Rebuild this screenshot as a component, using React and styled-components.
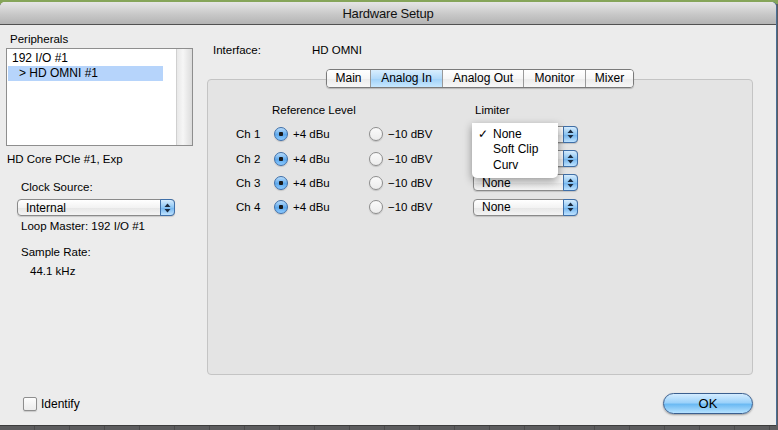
import React from 'react';
import styled, { createGlobalStyle } from 'styled-components';

const GlobalStyle = createGlobalStyle`
  html, body {
    margin: 0;
    padding: 0;
    background: #5a5a5c;
  }
  * {
    box-sizing: border-box;
  }
`;

const Desktop = styled.div`
  width: 778px;
  height: 430px;
  overflow: hidden;
  padding-top: 2px;
  background:
    linear-gradient(#86a55a, #86a55a) top / 100% 4px no-repeat,
    repeating-linear-gradient(90deg, #5c5c5e 0 34px, #4a4a4c 34px 35px);
  font-family: "Liberation Sans", Arial, sans-serif;
  font-size: 11.5px;
  color: #000;
`;

const Window = styled.div`
  width: 776px;
  height: 423px;
  display: flex;
  flex-direction: column;
  background: #ececec;
  border-radius: 5px 5px 0 0;
  box-shadow: 1px 0 0 #4a6e96, 0 1px 0 #3c3c3c;
  overflow: hidden;
`;

const TitleBar = styled.div`
  height: 23px;
  flex: none;
  display: flex;
  align-items: center;
  justify-content: center;
  background: linear-gradient(#e6e6e6, #c6c6c6 60%, #b4b4b4);
  border-bottom: 1px solid #515151;
  font-size: 13px;
  color: #111;
  letter-spacing: -0.2px;
`;

const Body = styled.div`
  flex: 1;
  display: flex;
  flex-direction: column;
`;

const Content = styled.div`
  display: flex;
  flex: 1;
`;

const Sidebar = styled.div`
  width: 207px;
  flex: none;
  display: flex;
  flex-direction: column;
  padding: 7px 0 0 6px;
`;

const Label = styled.div`
  line-height: 14px;
  margin-left: ${(p) => p.indent || 0}px;
  margin-top: ${(p) => p.top || 0}px;
`;

const ListBox = styled.div`
  width: 187px;
  height: 98px;
  margin-top: 2px;
  background: #fff;
  border: 1px solid #8e8e8e;
  display: flex;
`;

const ListItems = styled.div`
  flex: 1;
  padding: 2px 1px;
  font-size: 12px;
`;

const ListItem = styled.div`
  height: 15px;
  line-height: 15px;
  padding-left: ${(p) => (p.child ? 11 : 4)}px;
  width: 155px;
  background: ${(p) => (p.selected ? '#b6d4fb' : 'transparent')};
`;

const ScrollTrack = styled.div`
  width: 16px;
  background: linear-gradient(90deg, #e8e8e8, #f6f6f6 40%, #dcdcdc);
  border-left: 1px solid #d0d0d0;
`;

const SelectWrap = styled.div`
  margin: 5px 0 0 11px;
`;

const Select = styled.div`
  position: relative;
  width: ${(p) => p.width}px;
  height: 17px;
  display: flex;
  align-items: center;
  border: 1px solid #8a8a8a;
  border-radius: 4px;
  background: linear-gradient(#ffffff, #f3f3f3 50%, #e6e6e6 51%, #f4f4f4);
  padding-left: 8px;
  font-size: 12px;
  box-shadow: 0 1px 1px rgba(0, 0, 0, 0.15);
`;

const Stepper = styled.div`
  position: absolute;
  right: -1px;
  top: -1px;
  bottom: -1px;
  width: 15px;
  border: 1px solid #3f6fa8;
  border-radius: 0 4px 4px 0;
  background: linear-gradient(#d6ecfd, #8cc6f4 50%, #6fb3ee 51%, #bfe3ff);
  display: flex;
  align-items: center;
  justify-content: center;
`;

const Arrows = () => (
  <svg width="7" height="10" viewBox="0 0 7 10">
    <path d="M3.5 0.5 L6.5 4 H0.5 Z" fill="#1b2b3f" />
    <path d="M3.5 9.5 L6.5 6 H0.5 Z" fill="#1b2b3f" />
  </svg>
);

const Main = styled.div`
  flex: 1;
  display: flex;
  flex-direction: column;
  padding: 18px 23px 0 0;
`;

const InfoRow = styled.div`
  display: flex;
  padding-left: 6px;
  line-height: 14px;
`;

const InfoKey = styled.div`
  width: 99px;
`;

const TabArea = styled.div`
  margin-top: 12px;
  display: flex;
  flex-direction: column;
`;

const Tabs = styled.div`
  display: flex;
  align-self: flex-start;
  margin-left: 119px;
  position: relative;
  z-index: 1;
  border: 1px solid #7a7a7a;
  border-radius: 4px;
  overflow: hidden;
  box-shadow: 0 1px 1px rgba(0, 0, 0, 0.2);
`;

const Tab = styled.div`
  height: 17px;
  line-height: 17px;
  width: ${(p) => p.w}px;
  text-align: center;
  font-size: 12px;
  border-left: ${(p) => (p.first ? 'none' : '1px solid #9a9a9a')};
  background: ${(p) =>
    p.active
      ? 'linear-gradient(#d9eefe, #b2dafa 50%, #9fd0f7 51%, #c7e8ff)'
      : 'linear-gradient(#ffffff, #f6f6f6 50%, #ebebeb 51%, #f7f7f7)'};
`;

const TabBox = styled.div`
  margin-top: -9px;
  height: 296px;
  border: 1px solid #c4c4c4;
  border-radius: 4px;
  background: #e4e4e4;
  padding: 23px 0 0 28px;
`;

const Grid = styled.div`
  display: grid;
  grid-template-columns: 38px 95px 104px 106px;
  grid-template-rows: 19px repeat(4, 24.4px);
  align-items: center;
`;

const Header = styled.div`
  grid-column: ${(p) => p.col};
  margin-left: ${(p) => p.shift || 0}px;
  align-self: start;
  line-height: 14px;
`;

const Option = styled.div`
  display: flex;
  align-items: center;
  gap: 5px;
`;

const Radio = styled.div`
  width: 14px;
  height: 14px;
  border-radius: 50%;
  border: 1px solid ${(p) => (p.checked ? '#3f6fa8' : '#8e8e8e')};
  background: ${(p) =>
    p.checked
      ? 'radial-gradient(circle at 50% 50%, #1a1a1a 0 2px, transparent 2.5px), linear-gradient(#b8dcfb, #5fa9ec 55%, #8ccaff)'
      : 'linear-gradient(#fafafa, #ececec)'};
  box-shadow: 0 1px 1px rgba(0, 0, 0, 0.15);
`;

const Cell = styled.div`
  position: relative;
`;

const Menu = styled.div`
  position: absolute;
  left: -1px;
  top: -3px;
  width: 86px;
  z-index: 2;
  padding: 4px 0 4px;
  background: #fff;
  border-radius: 0 0 5px 5px;
  box-shadow: 0 3px 8px rgba(0, 0, 0, 0.4);
  font-size: 12px;
`;

const MenuItem = styled.div`
  position: relative;
  height: 15.7px;
  line-height: 15.7px;
  padding-left: 21px;
`;

const Check = styled.span`
  position: absolute;
  left: 6px;
`;

const Footer = styled.div`
  height: 52px;
  display: flex;
  align-items: center;
  justify-content: space-between;
  padding: 5px 23px 0 23px;
`;

const CheckRow = styled.div`
  display: flex;
  align-items: center;
  gap: 4px;
  font-size: 12px;
`;

const CheckBox = styled.div`
  width: 14px;
  height: 14px;
  border: 1px solid #8e8e8e;
  border-radius: 2px;
  background: linear-gradient(#fdfdfd, #ececec);
  box-shadow: 0 1px 1px rgba(0, 0, 0, 0.15);
`;

const OkButton = styled.div`
  width: 90px;
  height: 21px;
  border: 1px solid #3a5f8f;
  border-radius: 11px;
  background: linear-gradient(#d4ecff, #9cd2fa 45%, #6cbaf3 55%, #b6e2ff);
  display: flex;
  align-items: center;
  justify-content: center;
  font-size: 13px;
  box-shadow: 0 1px 2px rgba(0, 0, 0, 0.35);
`;

const channels = ['Ch 1', 'Ch 2', 'Ch 3', 'Ch 4'];
const tabs = ['Main', 'Analog In', 'Analog Out', 'Monitor', 'Mixer'];
const tabWidths = [43, 72, 81, 62, 48];

export default function App() {
  return (
    <>
      <GlobalStyle />
      <Desktop>
        <Window>
          <TitleBar>Hardware Setup</TitleBar>
          <Body>
            <Content>
              <Sidebar>
                <Label indent={4}>Peripherals</Label>
                <ListBox>
                  <ListItems>
                    <ListItem>192 I/O #1</ListItem>
                    <ListItem child selected>&gt; HD OMNI #1</ListItem>
                  </ListItems>
                  <ScrollTrack />
                </ListBox>
                <Label indent={1} top={6}>HD Core PCIe #1, Exp</Label>
                <Label indent={15} top={14}>Clock Source:</Label>
                <SelectWrap>
                  <Select width={158}>
                    Internal
                    <Stepper><Arrows /></Stepper>
                  </Select>
                </SelectWrap>
                <Label indent={15} top={3}>Loop Master: 192 I/O #1</Label>
                <Label indent={15} top={12}>Sample Rate:</Label>
                <Label indent={24} top={5}>44.1 kHz</Label>
              </Sidebar>
              <Main>
                <InfoRow>
                  <InfoKey>Interface:</InfoKey>
                  <div>HD OMNI</div>
                </InfoRow>
                <TabArea>
                  <Tabs>
                    {tabs.map((t, i) => (
                      <Tab key={t} w={tabWidths[i]} first={i === 0} active={t === 'Analog In'}>
                        {t}
                      </Tab>
                    ))}
                  </Tabs>
                  <TabBox>
                    <Grid>
                      <Header col={2} shift={-2}>Reference Level</Header>
                      <Header col={4} shift={2}>Limiter</Header>
                      {channels.map((ch, i) => (
                        <React.Fragment key={ch}>
                          <div>{ch}</div>
                          <Option>
                            <Radio checked />
                            <span>+4 dBu</span>
                          </Option>
                          <Option>
                            <Radio />
                            <span>&minus;10 dBV</span>
                          </Option>
                          <Cell>
                            <Select width={105}>
                              {i > 1 && 'None'}
                              <Stepper><Arrows /></Stepper>
                            </Select>
                            {i === 0 && (
                              <Menu>
                                <MenuItem><Check>✓</Check>None</MenuItem>
                                <MenuItem>Soft Clip</MenuItem>
                                <MenuItem>Curv</MenuItem>
                              </Menu>
                            )}
                          </Cell>
                        </React.Fragment>
                      ))}
                    </Grid>
                  </TabBox>
                </TabArea>
              </Main>
            </Content>
            <Footer>
              <CheckRow>
                <CheckBox />
                <span>Identify</span>
              </CheckRow>
              <OkButton>OK</OkButton>
            </Footer>
          </Body>
        </Window>
      </Desktop>
    </>
  );
}
